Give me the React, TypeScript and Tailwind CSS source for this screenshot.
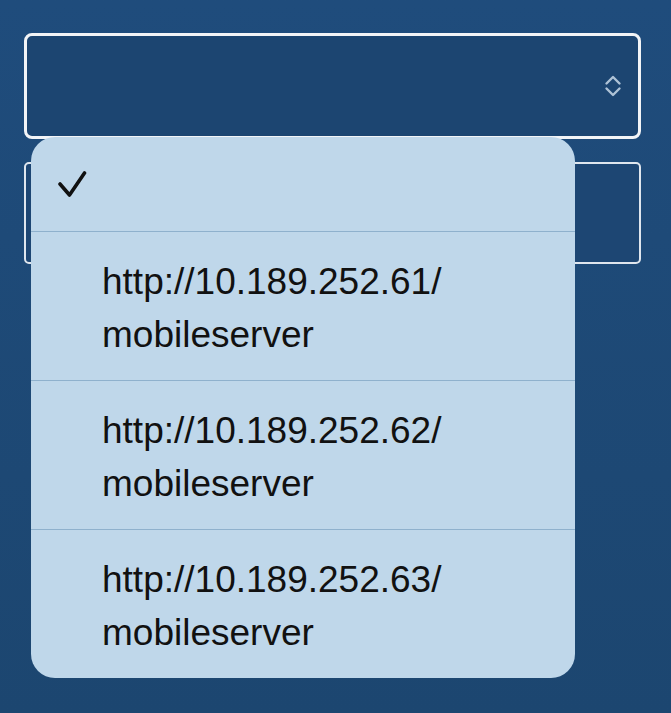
import React from 'react';

const servers = [
  'http://10.189.252.61/',
  'http://10.189.252.62/',
  'http://10.189.252.63/',
];

const ChevronUpDown = () => (
  <svg width="20" height="24" viewBox="0 0 20 24" fill="none" className="text-[#aec2d6]">
    <path d="M3.5 9.5L10 3l6.5 6.5M3.5 14.5L10 21l6.5-6.5" stroke="currentColor" strokeWidth="2.4" strokeLinecap="round" strokeLinejoin="round" />
  </svg>
);

const Check = () => (
  <svg width="30" height="28" viewBox="0 0 30 28" fill="none">
    <path d="M2 14l9.5 11L26.5 3" stroke="#111" strokeWidth="3.6" strokeLinecap="round" strokeLinejoin="round" />
  </svg>
);

const App = () => {
  return (
    <div
      className="relative h-[713px] w-full overflow-hidden bg-gradient-to-b from-[#1f4c7c] to-[#1c4670] px-[24px] pt-[33px]"
      style={{ fontFamily: '"Liberation Sans", Arial, sans-serif' }}
    >
      <div className="flex h-[106px] w-[617px] items-center justify-end rounded-[8px] border-[3px] border-[#f2f4f7] bg-[#1c4571] pr-[15px]">
        <ChevronUpDown />
      </div>
      <div className="mt-[23px] h-[102px] w-[617px] rounded-[5px] border-2 border-[#dfe6ee] bg-[#1d4673]"></div>

      <div className="absolute left-[31px] top-[137px] w-[544px] overflow-hidden rounded-[24px] bg-[#bfd7ea] text-[#111]">
        <div className="flex h-[94px] items-center pl-[27px]">
          <Check />
        </div>
        {servers.map((url) => (
          <div key={url} className="h-[149px] border-t border-[#8fb1cd] pl-[71px] pt-[23px] text-[37px] leading-[53px]">
            <div>{url}</div>
            <div>mobileserver</div>
          </div>
        ))}
      </div>
    </div>
  );
};

export default App;
